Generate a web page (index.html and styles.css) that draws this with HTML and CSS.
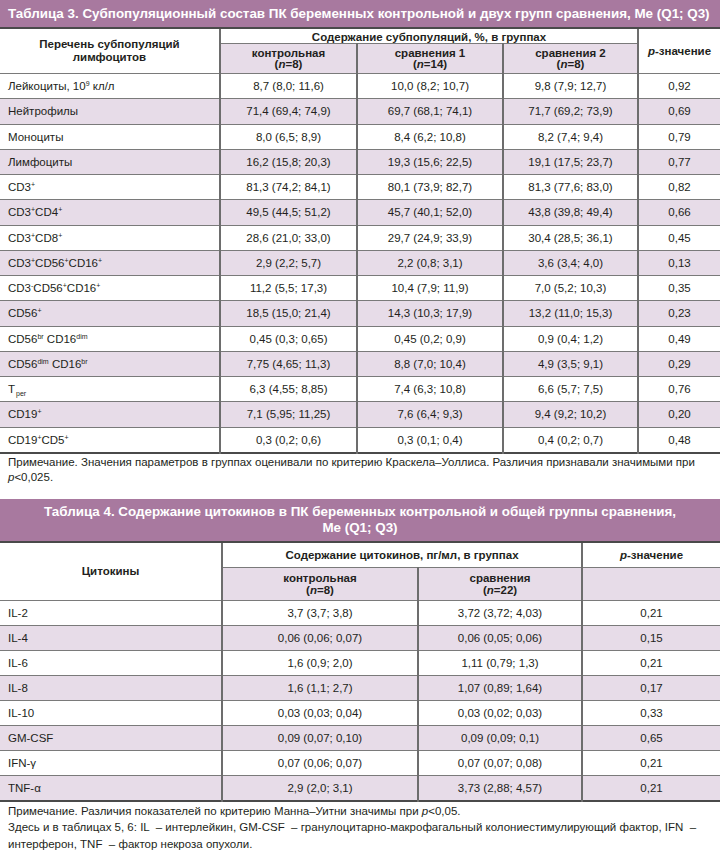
FILE: index.html
```html
<!DOCTYPE html>
<html lang="ru">
<head>
<meta charset="utf-8">
<title>Таблицы 3 и 4</title>
<link rel="stylesheet" href="styles.css">
</head>
<body>
<section class="block">
  <div class="cap cap-3">Таблица 3. Субпопуляционный состав ПК беременных контрольной и двух групп сравнения, Me (Q1; Q3)</div>
  <table class="grid t3">
    <colgroup>
      <col class="c3-1"><col class="c3-2"><col class="c3-3"><col class="c3-4"><col class="c3-5">
    </colgroup>
    <thead>
      <tr class="h1">
        <th rowspan="2" class="hname">Перечень субпопуляций<br>лимфоцитов</th>
        <th colspan="3" class="htop">Содержание субпопуляций, %, в группах</th>
        <th rowspan="2" class="hp"><i>p</i>-значение</th>
      </tr>
      <tr class="h2">
        <th class="sub">контрольная<br>(<i>n</i>=8)</th>
        <th class="sub">сравнения 1<br>(<i>n</i>=14)</th>
        <th class="sub">сравнения 2<br>(<i>n</i>=8)</th>
      </tr>
    </thead>
    <tbody>
      <tr><td>Лейкоциты, 10<sup>9</sup> кл/л</td><td>8,7 (8,0; 11,6)</td><td>10,0 (8,2; 10,7)</td><td>9,8 (7,9; 12,7)</td><td>0,92</td></tr>
      <tr class="alt"><td>Нейтрофилы</td><td>71,4 (69,4; 74,9)</td><td>69,7 (68,1; 74,1)</td><td>71,7 (69,2; 73,9)</td><td>0,69</td></tr>
      <tr><td>Моноциты</td><td>8,0 (6,5; 8,9)</td><td>8,4 (6,2; 10,8)</td><td>8,2 (7,4; 9,4)</td><td>0,79</td></tr>
      <tr class="alt"><td>Лимфоциты</td><td>16,2 (15,8; 20,3)</td><td>19,3 (15,6; 22,5)</td><td>19,1 (17,5; 23,7)</td><td>0,77</td></tr>
      <tr><td>CD3<sup>+</sup></td><td>81,3 (74,2; 84,1)</td><td>80,1 (73,9; 82,7)</td><td>81,3 (77,6; 83,0)</td><td>0,82</td></tr>
      <tr class="alt"><td>CD3<sup>+</sup>CD4<sup>+</sup></td><td>49,5 (44,5; 51,2)</td><td>45,7 (40,1; 52,0)</td><td>43,8 (39,8; 49,4)</td><td>0,66</td></tr>
      <tr><td>CD3<sup>+</sup>CD8<sup>+</sup></td><td>28,6 (21,0; 33,0)</td><td>29,7 (24,9; 33,9)</td><td>30,4 (28,5; 36,1)</td><td>0,45</td></tr>
      <tr class="alt"><td>CD3<sup>+</sup>CD56<sup>+</sup>CD16<sup>+</sup></td><td>2,9 (2,2; 5,7)</td><td>2,2 (0,8; 3,1)</td><td>3,6 (3,4; 4,0)</td><td>0,13</td></tr>
      <tr><td>CD3<sup>-</sup>CD56<sup>+</sup>CD16<sup>+</sup></td><td>11,2 (5,5; 17,3)</td><td>10,4 (7,9; 11,9)</td><td>7,0 (5,2; 10,3)</td><td>0,35</td></tr>
      <tr class="alt"><td>CD56<sup>+</sup></td><td>18,5 (15,0; 21,4)</td><td>14,3 (10,3; 17,9)</td><td>13,2 (11,0; 15,3)</td><td>0,23</td></tr>
      <tr><td>CD56<sup>br</sup> CD16<sup>dim</sup></td><td>0,45 (0,3; 0,65)</td><td>0,45 (0,2; 0,9)</td><td>0,9 (0,4; 1,2)</td><td>0,49</td></tr>
      <tr class="alt"><td>CD56<sup>dim</sup> CD16<sup>br</sup></td><td>7,75 (4,65; 11,3)</td><td>8,8 (7,0; 10,4)</td><td>4,9 (3,5; 9,1)</td><td>0,29</td></tr>
      <tr><td>T<sub>рег</sub></td><td>6,3 (4,55; 8,85)</td><td>7,4 (6,3; 10,8)</td><td>6,6 (5,7; 7,5)</td><td>0,76</td></tr>
      <tr class="alt"><td>CD19<sup>+</sup></td><td>7,1 (5,95; 11,25)</td><td>7,6 (6,4; 9,3)</td><td>9,4 (9,2; 10,2)</td><td>0,20</td></tr>
      <tr><td>CD19<sup>+</sup>CD5<sup>+</sup></td><td>0,3 (0,2; 0,6)</td><td>0,3 (0,1; 0,4)</td><td>0,4 (0,2; 0,7)</td><td>0,48</td></tr>
    </tbody>
  </table>
  <p class="note">Примечание. Значения параметров в группах оценивали по критерию Краскела–Уоллиса. Различия признавали значимыми при <i>p</i>&lt;0,025.</p>
</section>

<section class="block block-4">
  <div class="cap cap-4">Таблица 4. Содержание цитокинов в ПК беременных контрольной и общей группы сравнения,<br>Me (Q1; Q3)</div>
  <table class="grid t4">
    <colgroup>
      <col class="c4-1"><col class="c4-2"><col class="c4-3"><col class="c4-4">
    </colgroup>
    <thead>
      <tr class="h1">
        <th rowspan="2" class="hname">Цитокины</th>
        <th colspan="2" class="htop">Содержание цитокинов, пг/мл, в группах</th>
        <th class="htop hp4"><i>p</i>-значение</th>
      </tr>
      <tr class="h2">
        <th class="sub">контрольная<br>(<i>n</i>=8)</th>
        <th class="sub">сравнения<br>(<i>n</i>=22)</th>
        <th class="sub"></th>
      </tr>
    </thead>
    <tbody>
      <tr><td>IL-2</td><td>3,7 (3,7; 3,8)</td><td>3,72 (3,72; 4,03)</td><td>0,21</td></tr>
      <tr class="alt"><td>IL-4</td><td>0,06 (0,06; 0,07)</td><td>0,06 (0,05; 0,06)</td><td>0,15</td></tr>
      <tr><td>IL-6</td><td>1,6 (0,9; 2,0)</td><td>1,11 (0,79; 1,3)</td><td>0,21</td></tr>
      <tr class="alt"><td>IL-8</td><td>1,6 (1,1; 2,7)</td><td>1,07 (0,89; 1,64)</td><td>0,17</td></tr>
      <tr><td>IL-10</td><td>0,03 (0,03; 0,04)</td><td>0,03 (0,02; 0,03)</td><td>0,33</td></tr>
      <tr class="alt"><td>GM-CSF</td><td>0,09 (0,07; 0,10)</td><td>0,09 (0,09; 0,1)</td><td>0,65</td></tr>
      <tr><td>IFN-γ</td><td>0,07 (0,06; 0,07)</td><td>0,07 (0,07; 0,08)</td><td>0,21</td></tr>
      <tr class="alt"><td>TNF-α</td><td>2,9 (2,0; 3,1)</td><td>3,73 (2,88; 4,57)</td><td>0,21</td></tr>
    </tbody>
  </table>
  <p class="note note-4">Примечание. Различия показателей по критерию Манна–Уитни значимы при <i>p</i>&lt;0,05.<br>Здесь и в таблицах 5, 6: IL &nbsp;– интерлейкин, GM-CSF &nbsp;– гранулоцитарно-макрофагальный колониестимулирующий фактор, IFN &nbsp;– интерферон, TNF &nbsp;– фактор некроза опухоли.</p>
</section>
</body>
</html>
```

FILE: styles.css
```css
html, body {
  margin: 0;
  padding: 0;
  background: #ffffff;
}

body {
  width: 720px;
  font-family: "Liberation Sans", Arial, sans-serif;
  color: #231f20;
}

.cap {
  background: #a8799f;
  color: #ffffff;
  font-weight: bold;
  font-size: 13.4px;
  border-bottom: 2px solid #4a4a4a;
}

.cap-3 {
  height: 27px;
  line-height: 28px;
  padding-left: 8px;
  white-space: nowrap;
}

.block-4 {
  margin-top: 13px;
}

.cap-4 {
  text-align: center;
  line-height: 16px;
  padding: 5px 0;
}

.grid {
  width: 720px;
  border-collapse: collapse;
  table-layout: fixed;
  font-size: 11.5px;
  border-bottom: 2px solid #4a4a4a;
}

.c3-1 { width: 220px; }
.c3-2 { width: 137px; }
.c3-3 { width: 146px; }
.c3-4 { width: 135px; }
.c3-5 { width: 82px; }

.c4-1 { width: 222px; }
.c4-2 { width: 196px; }
.c4-3 { width: 164px; }
.c4-4 { width: 138px; }

.grid th,
.grid td {
  padding: 0;
  border-left: 2px solid #6d6d6d;
  text-align: center;
  vertical-align: middle;
}

.grid th:first-child,
.grid td:first-child {
  border-left: none;
}

.grid th {
  font-weight: bold;
}

.grid .h2 th:first-child {
  border-left: 2px solid #6d6d6d;
}

.t3 .h1 .htop {
  height: 12px;
  line-height: 12px;
  padding-top: 2px;
}

.t3 .h1 .hname,
.t3 .h1 .hp {
  line-height: 13px;
}

.htop {
  border-bottom: 1px solid #7a7a7a;
}

.t3 .h2 th {
  height: 29px;
  line-height: 11px;
}

.sub {
  background: #e7dce8;
}

.t4 .h1 th {
  height: 24px;
}

.t4 .h2 th {
  height: 32px;
  line-height: 12px;
}

.grid tbody tr {
  border-top: 1px solid #7a7a7a;
}

.t3 tbody td {
  height: 24.25px;
}

.t4 tbody td {
  height: 24px;
}

.grid tbody td:first-child {
  text-align: left;
  padding-left: 8px;
}

.grid tbody tr.alt td {
  background: #e7dce8;
}

sup, sub {
  font-size: 7px;
  line-height: 0;
}

sup {
  vertical-align: 4px;
}

sub {
  vertical-align: -3px;
  padding-left: 1px;
}

.note {
  margin: 0;
  padding: 1px 8px 0;
  font-size: 11.5px;
  line-height: 15.5px;
}

.note-4 {
  padding-top: 1px;
  line-height: 16.5px;
}
```
